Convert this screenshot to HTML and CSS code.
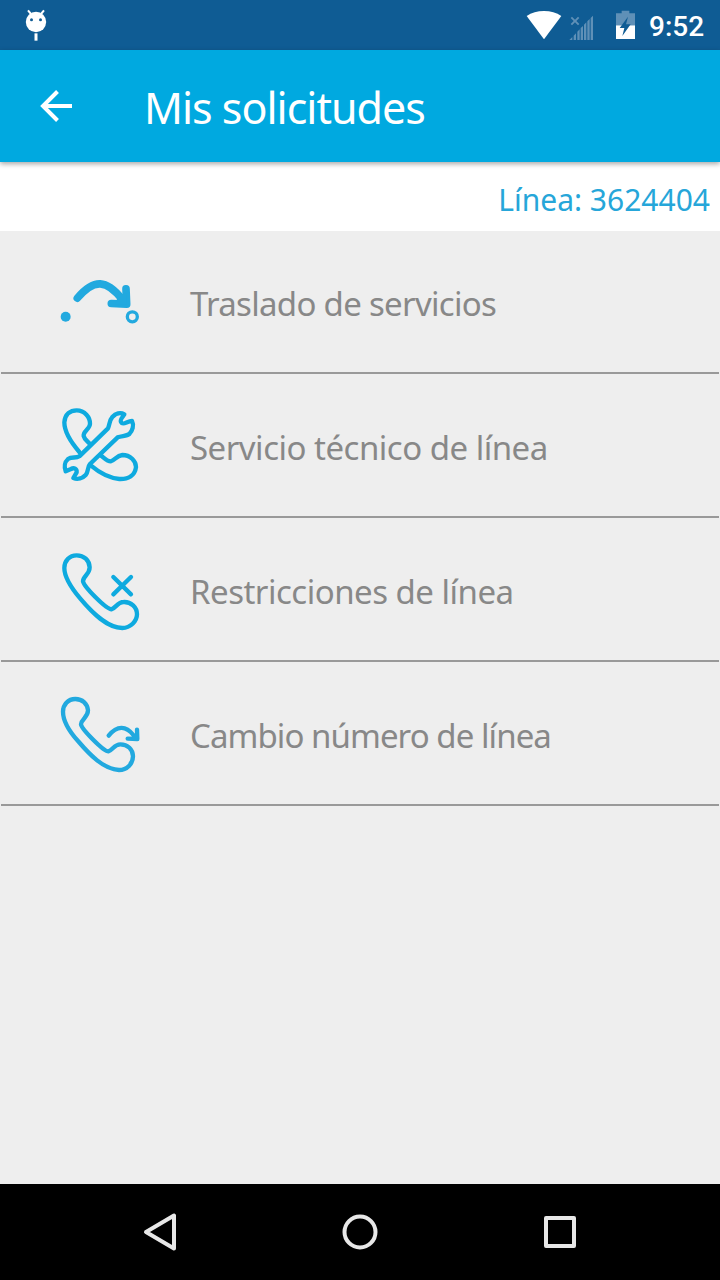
FILE: index.html
```
<!DOCTYPE html>
<html lang="es">
<head>
    <meta charset="UTF-8">
    <meta name="viewport" content="width=device-width, initial-scale=1.0">
    <title>Mis solicitudes</title>
    <link rel="stylesheet" href="styles.css">
</head>
<body>
    <div class="status-bar">
        <svg class="debug-icon" viewBox="0 0 120 150">
            <path d="M84 31l9 11M132 31l-9 11" transform="translate(-48 0)" stroke="#fff" stroke-width="6"/>
            <circle cx="60" cy="66" r="30.500" fill="#fff"/>
            <circle cx="46.500" cy="59" r="4.500" fill="#0f5c94"/>
            <circle cx="73.500" cy="59" r="4.500" fill="#0f5c94"/>
            <path d="M55.500 100h9v22h-9z" fill="#fff"/>
        </svg>
        <div class="status-right">
            <svg class="system-icons" viewBox="0 0 390 150">
                <path d="M50 48Q72 33 102 33T154 48L102 118z" fill="#fff"/>
                <g fill="#5f90b7">
                    <path d="M182 54l4-4 9 9 9-9 4 4-9 9 9 9-4 4-9-9-9 9-4-4 9-9z"/>
                    <path d="M178 120l9-9v9zM191 107l7-7v20h-7zM202 95l7-7v32h-7zM212 84l7-6v42h-7zM222 74l7-7v53h-7zM232 64l7-7v63h-7zM242 54l7-7v73h-7z"/>
                    <path d="M318 40h17v-8h23v8h17v36h-57z"/>
                </g>
                <path d="M318 76h57v41h-57z" fill="#fff"/>
                <path d="M354 50L329 84h14l-6 24 25-35h-14z" fill="#0f5c94"/>
            </svg>
            <span class="clock">9:52</span>
        </div>
    </div>

    <header class="app-bar">
        <svg class="back-icon" viewBox="0 0 34 34">
            <path d="M33 17H4M18.500 2.500L4 17l14.500 14.500" fill="none" stroke="#fff" stroke-width="4"/>
        </svg>
        <h1>Mis solicitudes</h1>
    </header>

    <div class="line-number">Línea: 3624404</div>

    <ul class="request-list">
        <li>
            <svg class="icon icon-light" viewBox="0 -40.500 300 300">
                <circle class="filled" cx="47" cy="154" r="15"/>
                <circle cx="247" cy="154" r="15" stroke-width="10"/>
                <path d="M82 98C132 38 170 42 217 102" stroke-width="23"/>
                <path d="M228 70L230 116L184 114" stroke-width="23"/>
                <path class="filled" d="M205 88L230 84V116H196z"/>
            </svg>
            <span class="label-1">Traslado de servicios</span>
        </li>
        <li>
            <svg class="icon" viewBox="0 0 300 300">
                <path d="M88 171C62 141 43 111 43 82C45 57 61 46 80 46C104 46 121 67 120 87C119 103 99 108 101 123C103 133 112 138 120 147"/>
                <path d="M151 180C162 188 171 199 182 199C194 197 199 182 217 180C241 180 258 198 258 216C255 242 234 253 208 252C178 249 148 233 123 212"/>
                <path d="M88 184L174 100C179 89 178 76 187 66C197 55 211 51 223 58C218 66 209 75 213 81C219 93 231 78 246 78C253 91 247 108 238 117C230 124 215 122 203 127L120 207C112 216 116 230 107 240C98 250 83 254 70 249L80 232C81 221 72 217 63 222L47 229C42 216 44 201 54 192C65 184 78 191 88 184z"/>
            </svg>
            <span class="label-2">Servicio técnico de línea</span>
        </li>
        <li>
            <svg class="icon" viewBox="0 -3 300 300">
                <path d="M80 46C58 46 43 63 43 84C43 112 63 143 91 176C128 220 171 263 217 264C241 264 261 244 261 223C261 202 243 185 221 186C202 186 197 205 184 208C169 208 101 140 99 124C99 108 119 104 119 82C118 61 102 46 80 46z"/>
                <path d="M190 111L243 163M243 111L190 163"/>
            </svg>
            <span class="label-3">Restricciones de línea</span>
        </li>
        <li>
            <svg class="icon icon-light" viewBox="0 -6 300 300">
                <path d="M76 42C54 42 39 59 39 80C39 107 58 139 84 168C119 209 161 253 207 255C231 255 249 236 249 214C249 193 233 178 211 178C192 178 188 196 175 199C160 199 94 131 93 118C94 101 114 98 114 76C112 56 97 42 76 42z"/>
                <path d="M176 152C202 119 229 123 250 150M261 134L262 162L233 161"/>
                <path class="filled" d="M247 151L262 146V162H245z"/>
            </svg>
            <span class="label-4">Cambio número de línea</span>
        </li>
    </ul>

    <nav class="nav-bar">
        <svg viewBox="0 0 200 96">
            <path d="M86 48L114 31.500V64.500z"/>
        </svg>
        <svg viewBox="0 0 200 96">
            <circle cx="100" cy="48" r="15.500"/>
        </svg>
        <svg viewBox="0 0 200 96">
            <rect x="86" y="34" width="28" height="28"/>
        </svg>
    </nav>
</body>
</html>
```
FILE: styles.css
```
* {
    box-sizing: border-box;
}

body {
    margin: 0;
    height: 1280px;
    display: flex;
    flex-direction: column;
    overflow: hidden;
    background-color: #eee;
    font-family: "Noto Sans", sans-serif;
}

svg {
    display: block;
    flex-shrink: 0;
}

.status-bar {
    height: 50px;
    padding: 0 16px;
    display: flex;
    justify-content: space-between;
    background-color: #0f5c94;
    flex-shrink: 0;
}

.debug-icon {
    width: 40px;
    height: 50px;
}

.status-right {
    display: flex;
    align-items: center;
}

.system-icons {
    width: 130px;
    height: 50px;
}

.clock {
    width: 64px;
    padding: 3px 0 0 9px;
    color: #fff;
    font-family: Roboto, sans-serif;
    font-size: 28px;
    font-weight: 500;
    white-space: nowrap;
}

.app-bar {
    height: 112px;
    padding-left: 39px;
    display: flex;
    align-items: center;
    background-color: #00a9e0;
    box-shadow: 0 2px 5px rgba(0, 0, 0, 0.35);
    z-index: 1;
    flex-shrink: 0;
}

.back-icon {
    width: 34px;
    height: 34px;
}

h1 {
    margin: 3px 0 0 71px;
    color: #fff;
    font-size: 43px;
    font-weight: 400;
    letter-spacing: -1px;
}

.line-number {
    height: 69px;
    padding: 7px 10px 0 0;
    line-height: 62px;
    text-align: right;
    background-color: #fff;
    color: #26a6d9;
    font-size: 30px;
    flex-shrink: 0;
}

.request-list {
    flex: 1;
    margin: 0;
    padding: 0 1px;
    list-style: none;
}

.request-list li {
    height: 144px;
    padding-left: 49px;
    display: flex;
    align-items: center;
    border-bottom: 2px solid #999;
    color: #888;
    font-size: 33px;
    white-space: nowrap;
}

.request-list li:first-child {
    height: 143px;
}

.request-list span {
    margin: 5px 0 0 40px;
}

.request-list .label-1 {
    margin-top: 3px;
    letter-spacing: -0.7px;
}

.label-2,
.label-3 {
    letter-spacing: -0.5px;
}

.label-4 {
    letter-spacing: -0.93px;
}

.icon {
    width: 100px;
    height: 100px;
    fill: none;
    stroke: #0eaadf;
    stroke-width: 13;
    stroke-linecap: round;
    stroke-linejoin: round;
}

.icon-light {
    stroke: #22a9df;
}

.icon .filled {
    fill: #22a9df;
    stroke: none;
}

.nav-bar {
    height: 96px;
    padding: 0 60px;
    display: flex;
    background-color: #000;
    flex-shrink: 0;
}

.nav-bar svg {
    width: 200px;
    height: 96px;
    fill: none;
    stroke: #e8e8e8;
    stroke-width: 4;
    stroke-linejoin: round;
}
```
